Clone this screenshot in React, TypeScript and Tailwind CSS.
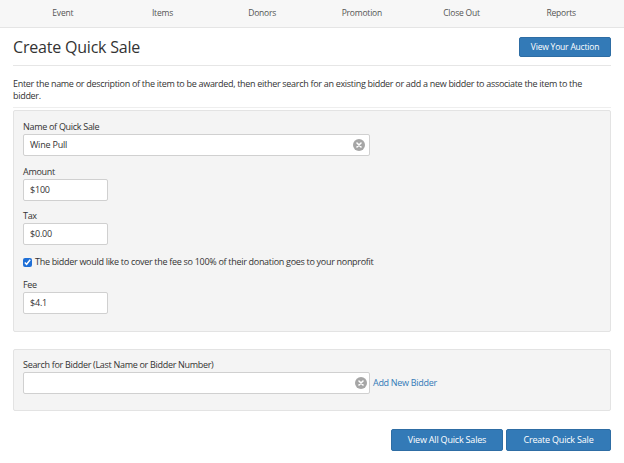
import React from 'react';

const navItems = ['Event', 'Items', 'Donors', 'Promotion', 'Close Out', 'Reports'];

function ClearIcon() {
  return (
    <svg width="12" height="12" viewBox="0 0 12 12" className="shrink-0">
      <circle cx="6" cy="6" r="6" fill="#a6a6a6" />
      <path d="M4 4 L8 8 M8 4 L4 8" stroke="#ffffff" strokeWidth="1.6" strokeLinecap="round" />
    </svg>
  );
}

function Field({ label, value, wide }: { label: string; value: string; wide?: boolean }) {
  return (
    <div>
      <div className="text-[9px] leading-[15px] tracking-[-0.3px] text-[#333]">{label}</div>
      <div
        className={`relative flex h-[22px] items-center rounded-[2px] border border-[#d0d0d0] bg-white pl-[6px] text-[9px] tracking-[-0.2px] text-[#333] ${
          wide ? 'w-[347px]' : 'w-[85px]'
        }`}
      >
        {value}
        {wide && (
          <span className="absolute right-[4px] top-[4px]">
            <ClearIcon />
          </span>
        )}
      </div>
    </div>
  );
}

export default function App() {
  return (
    <div className="min-h-[463px] w-[624px] bg-white font-['Open_Sans',sans-serif] text-[#333]">
      {/* Top nav */}
      <div className="h-[28px] border-b border-[#e5e5e5] bg-[#f7f7f7]">
        <div className="mx-[13px] grid h-full grid-cols-6 items-center">
          {navItems.map((item) => (
            <div key={item} className="text-center text-[8.5px] tracking-[-0.2px] text-[#555]">
              {item}
            </div>
          ))}
        </div>
      </div>

      <div className="px-[13px]">
        {/* Header */}
        <div className="flex items-center justify-between border-b border-[#e6e6e6] pb-[8px] pt-[9px]">
          <h1 className="text-[16px] font-normal leading-[20px] tracking-[-0.2px] text-[#333]">Create Quick Sale</h1>
          <button className="h-[20px] w-[92px] rounded-[2px] border border-[#2e6da4] bg-[#337ab7] text-[8.5px] tracking-[-0.2px] text-white">
            View Your Auction
          </button>
        </div>

        {/* Description */}
        <p className="border-b border-[#eeeeee] pb-[5px] pt-[12px] pr-[14px] text-[9px] leading-[12px] tracking-[-0.3px]">
          Enter the name or description of the item to be awarded, then either search for an existing bidder or add a
          new bidder to associate the item to the bidder.
        </p>

        {/* Item panel */}
        <div className="mt-[2px] flex flex-col gap-[8px] rounded-[2px] border border-[#e3e3e3] bg-[#f4f4f4] px-[9px] pb-[17px] pt-[8px]">
          <Field label="Name of Quick Sale" value="Wine Pull" wide />
          <Field label="Amount" value="$100" />
          <div className="-mt-[1px]">
            <Field label="Tax" value="$0.00" />
          </div>
          <label className="mt-[2px] flex items-center gap-[3px] text-[9px] leading-[14px] tracking-[-0.3px]">
            <input type="checkbox" defaultChecked className="m-0 h-[9px] w-[9px] accent-[#1f6fd6]" />
            The bidder would like to cover the fee so 100% of their donation goes to your nonprofit
          </label>
          <div>
            <Field label="Fee" value="$4.1" />
          </div>
        </div>

        {/* Bidder panel */}
        <div className="mt-[17px] rounded-[2px] border border-[#e3e3e3] bg-[#f4f4f4] px-[9px] pb-[16px] pt-[7px]">
          <div className="text-[9px] leading-[15px] tracking-[-0.3px]">Search for Bidder (Last Name or Bidder Number)</div>
          <div className="flex items-center">
            <div className="relative h-[22px] w-[347px] rounded-[2px] border border-[#d0d0d0] bg-white">
              <span className="absolute right-[2px] top-[4px]">
                <ClearIcon />
              </span>
            </div>
            <a className="ml-[3px] text-[9px] tracking-[-0.3px] text-[#337ab7]">Add New Bidder</a>
          </div>
        </div>

        {/* Actions */}
        <div className="mt-[18px] flex justify-end gap-[3px]">
          <button className="h-[22px] w-[112px] rounded-[2px] border border-[#2e6da4] bg-[#337ab7] text-[9px] tracking-[-0.2px] text-white">
            View All Quick Sales
          </button>
          <button className="h-[22px] w-[105px] rounded-[2px] border border-[#2e6da4] bg-[#337ab7] text-[9px] tracking-[-0.2px] text-white">
            Create Quick Sale
          </button>
        </div>
      </div>
    </div>
  );
}
